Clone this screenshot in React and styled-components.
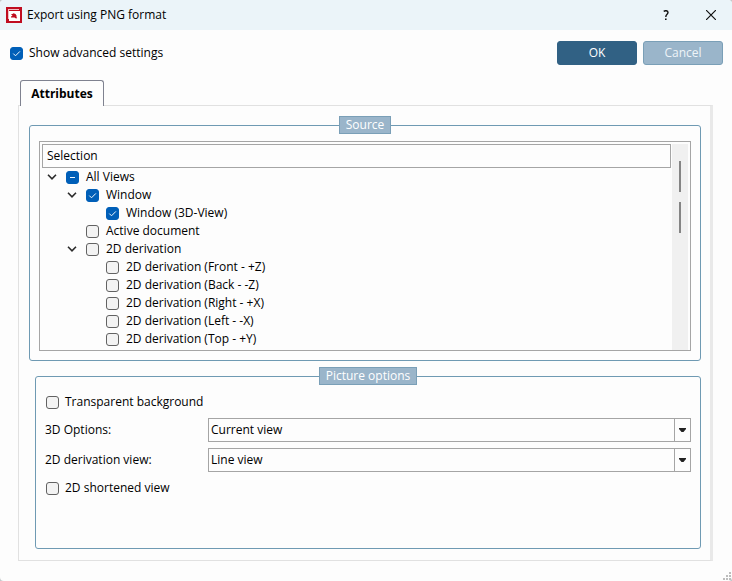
import React, { useEffect, useRef, useState } from 'react';
import styled, { createGlobalStyle } from 'styled-components';

const GlobalStyle = createGlobalStyle`
  * {
    box-sizing: border-box;
  }

  body {
    margin: 0;
    background: #c4c8ca;
  }

  body, button, select, input {
    font-family: 'Open Sans', 'Noto Sans', sans-serif;
    font-size: 12px;
    line-height: 18px;
    color: #000;
  }
`;

const Shell = styled.div`
  position: relative;
`;

const Dialog = styled.div`
  display: flex;
  flex-direction: column;
  min-height: 100vh;
  background: #fdfdfd;
  border-radius: 4px;
  overflow: hidden;
`;

const TitleBar = styled.header`
  display: flex;
  align-items: center;
  height: 30px;
  padding: 0 6px;
  background: #ebf4f9;
`;

const Title = styled.h1`
  flex: 1;
  margin: 0 0 0 5px;
  font-size: 12px;
  font-weight: 400;
`;

const TitleButton = styled.button`
  display: flex;
  align-items: center;
  justify-content: center;
  width: 30px;
  height: 28px;
  margin-left: ${({ $gap }) => $gap || 0}px;
  padding: 0;
  border: 0;
  background: transparent;
`;

const Toolbar = styled.div`
  display: flex;
  align-items: center;
  gap: 6px;
  padding: 11px 9px 15px 10px;
`;

const Spacer = styled.div`
  flex: 1;
`;

const ActionButton = styled.button`
  width: 80px;
  height: 24px;
  padding: 0;
  border: 1px solid ${({ $primary }) => ($primary ? '#316184' : '#7a9fb7')};
  border-radius: 3px;
  background: ${({ $primary }) => ($primary ? '#316184' : '#9ab5ca')};
  color: ${({ $primary }) => ($primary ? '#fff' : '#eef4f8')};
`;

const CheckLabel = styled.label`
  display: inline-flex;
  align-items: center;
  gap: ${({ $gap }) => $gap || 6}px;
  height: 18px;
  white-space: nowrap;
`;

const CheckBox = styled.span`
  display: grid;
  width: 13px;
  height: 13px;

  > * {
    grid-area: 1 / 1;
  }

  svg {
    pointer-events: none;
  }
`;

const CheckInput = styled.input`
  appearance: none;
  width: 13px;
  height: 13px;
  margin: 0;
  border: 1px solid #626262;
  border-radius: 3px;
  background: #f3f3f3;

  &:checked,
  &:indeterminate {
    border-color: #005fb8;
    background: #005fb8;
  }
`;

const TabList = styled.div`
  display: flex;
  padding: 0 20px;
`;

const Tab = styled.button`
  position: relative;
  height: 26px;
  min-width: 84px;
  margin-bottom: -1px;
  padding: 0 10px;
  border: 1px solid #7f8290;
  border-bottom: 0;
  border-radius: 3px 3px 0 0;
  background: #fdfdfd;
  font-weight: 700;
`;

const TabPanel = styled.div`
  display: flex;
  flex: 1;
  flex-direction: column;
  gap: 6px;
  margin: 0 19px 20px 18px;
  padding: 10px 9px 11px 10px;
  border: 1px solid #e1e1e1;
  border-right: 3px solid #e9e9e9;
`;

const Group = styled.fieldset`
  flex: ${({ $grow }) => ($grow ? '1' : 'none')};
  min-width: 0;
  margin: 0 0 0 ${({ $indent }) => $indent || 0}px;
  padding: ${({ $padding }) => $padding};
  border: 1px solid #6f9ab3;
  border-radius: 3px;
`;

const Legend = styled.legend`
  height: 18px;
  margin: 0 auto;
  padding: 0 6px;
  border: 1px solid #7a9fb7;
  background: #9ab5ca;
  color: #fff;
  line-height: 16px;
`;

const TreeFrame = styled.div`
  display: flex;
  gap: 1px;
  height: 210px;
  padding: 2px 2px 0;
  border: 1px solid #a5a5a5;
`;

const TreeMain = styled.div`
  flex: 1;
  overflow: hidden;
`;

const TreeHeader = styled.div`
  height: 24px;
  padding: 2px 4px;
  border: 1px solid #a5a5a5;
`;

const TreeList = styled.ul`
  margin: 0;
  padding: 0;
  list-style: none;
`;

const TreeRow = styled.li`
  display: flex;
  align-items: center;
  height: 18px;
  padding-left: ${({ $level }) => $level * 20 + 5}px;
`;

const Expander = styled.button`
  display: flex;
  align-items: center;
  width: 19px;
  height: 18px;
  padding: 0;
  border: 0;
  background: transparent;
`;

const ExpanderGap = styled.span`
  width: 19px;
`;

const ScrollTrack = styled.div`
  display: flex;
  flex-direction: column;
  align-items: center;
  gap: 10px;
  width: 16px;
  padding-top: 17px;
  background: #f0f0f0;
`;

const ScrollMark = styled.div`
  width: 2px;
  height: 31px;
  background: #858585;
`;

const OptionRow = styled.div`
  display: grid;
  grid-template-columns: 162px 1fr;
  align-items: center;
  height: 24px;
  margin-bottom: 6px;
`;

const SelectWrap = styled.div`
  position: relative;
  height: 24px;
  margin-left: 1px;
`;

const Select = styled.select`
  appearance: none;
  width: 100%;
  height: 24px;
  padding: 0 20px 0 2px;
  border: 1px solid #a5a5a5;
  border-radius: 0;
  background: #fdfdfd;
`;

const SelectArrow = styled.span`
  position: absolute;
  top: 0;
  right: 0;
  display: flex;
  align-items: center;
  justify-content: center;
  width: 17px;
  height: 24px;
  border: 1px solid #a5a5a5;
  pointer-events: none;
`;

const CheckRow = styled.div`
  display: flex;
  margin: 7px 0;
  padding-left: 1px;
`;

const SizeGrip = styled.svg`
  position: absolute;
  right: 0;
  bottom: 0;
`;

const TREE = [
  { id: 'all', label: 'All Views', level: 0, parent: true, state: 'mixed' },
  { id: 'window', label: 'Window', level: 1, parent: true, state: 'on' },
  { id: 'window3d', label: 'Window (3D-View)', level: 2, state: 'on' },
  { id: 'active', label: 'Active document', level: 1 },
  { id: '2d', label: '2D derivation', level: 1, parent: true },
  { id: 'front', label: '2D derivation (Front - +Z)', level: 2 },
  { id: 'back', label: '2D derivation (Back - -Z)', level: 2 },
  { id: 'right', label: '2D derivation (Right - +X)', level: 2 },
  { id: 'left', label: '2D derivation (Left - -X)', level: 2 },
  { id: 'top', label: '2D derivation (Top - +Y)', level: 2 },
];

const AppIcon = () => (
  <svg width="16" height="16" viewBox="0 0 16 16" aria-hidden="true">
    <rect width="16" height="16" fill="#c00d20" />
    <path d="M2 2h11v1H3v9H2z" fill="#f0bfc4" />
    <rect x="3" y="4" width="11" height="10" fill="#fff" />
    <path d="M5 7h1.5l1-.8 2 .8 1 1.6v1.6l.8.8-1.3.6-1.5-1H5V9.400l1.500-.6z" fill="#c00d20" />
  </svg>
);

const Check = ({ label, state, gap }) => {
  const [checked, setChecked] = useState(state === 'on');
  const [mixed, setMixed] = useState(state === 'mixed');
  const ref = useRef(null);

  useEffect(() => {
    ref.current.indeterminate = mixed;
  }, [mixed]);

  const onChange = e => {
    setMixed(false);
    setChecked(e.target.checked);
  };

  return (
    <CheckLabel $gap={gap}>
      <CheckBox>
        <CheckInput ref={ref} type="checkbox" checked={checked} onChange={onChange} />
        {(checked || mixed) && (
          <svg width="13" height="13" viewBox="0 0 13 13" fill="none" stroke="#f0f7fc">
            {mixed ? <path d="M4 6.5h5" /> : <path d="M3.3 6.6l2.2 2.2 4.4-4.4" />}
          </svg>
        )}
      </CheckBox>
      {label}
    </CheckLabel>
  );
};

const Combo = ({ id, label, options }) => (
  <OptionRow>
    <label htmlFor={id}>{label}</label>
    <SelectWrap>
      <Select id={id} defaultValue={options[0]}>
        {options.map(option => (
          <option key={option}>{option}</option>
        ))}
      </Select>
      <SelectArrow>
        <svg width="7" height="4" viewBox="0 0 7 4">
          <path d="M0 0h7v1L4.5 4h-2L0 1z" fill="#222" />
        </svg>
      </SelectArrow>
    </SelectWrap>
  </OptionRow>
);

const App = () => (
  <Shell>
    <GlobalStyle />
    <Dialog role="dialog" aria-labelledby="dialog-title">
      <TitleBar>
        <AppIcon />
        <Title id="dialog-title">Export using PNG format</Title>
        <TitleButton type="button" aria-label="Help">
          <svg width="8" height="10" viewBox="0 0 8 10" fill="none" stroke="#111" strokeWidth="1.4">
            <path d="M1.7 1.3C3 .4 6 .4 6 2.6 6 4.4 3.8 4.3 3.8 7" />
            <path d="M3 9.2h1.6" />
          </svg>
        </TitleButton>
        <TitleButton type="button" aria-label="Close" $gap={15}>
          <svg width="10" height="10" viewBox="0 0 10 10" stroke="#111" strokeWidth="1.2">
            <path d="M0 0l10 10M10 0L0 10" />
          </svg>
        </TitleButton>
      </TitleBar>
      <Toolbar>
        <Check label="Show advanced settings" state="on" />
        <Spacer />
        <ActionButton type="button" $primary>
          OK
        </ActionButton>
        <ActionButton type="button">Cancel</ActionButton>
      </Toolbar>
      <TabList role="tablist">
        <Tab type="button" role="tab" id="tab-attributes" aria-selected="true" aria-controls="panel-attributes">
          Attributes
        </Tab>
      </TabList>
      <TabPanel role="tabpanel" id="panel-attributes" aria-labelledby="tab-attributes">
        <Group $padding="7px 9px 9px">
          <Legend>Source</Legend>
          <TreeFrame>
            <TreeMain>
              <TreeHeader>Selection</TreeHeader>
              <TreeList>
                {TREE.map(node => (
                  <TreeRow key={node.id} $level={node.level}>
                    {node.parent ? (
                      <Expander type="button" aria-label={`Collapse ${node.label}`}>
                        <svg width="10" height="6" viewBox="0 0 10 6" fill="none" stroke="#2b2b2b" strokeWidth="1.6">
                          <path d="M1 .8l4 4 4-4" />
                        </svg>
                      </Expander>
                    ) : (
                      <ExpanderGap />
                    )}
                    <Check label={node.label} state={node.state} gap={7} />
                  </TreeRow>
                ))}
              </TreeList>
            </TreeMain>
            <ScrollTrack>
              <ScrollMark />
              <ScrollMark />
            </ScrollTrack>
          </TreeFrame>
        </Group>
        <Group $grow $indent={6} $padding="1px 9px">
          <Legend>Picture options</Legend>
          <CheckRow>
            <Check label="Transparent background" />
          </CheckRow>
          <Combo id="options-3d" label="3D Options:" options={['Current view']} />
          <Combo id="view-2d" label="2D derivation view:" options={['Line view']} />
          <CheckRow>
            <Check label="2D shortened view" />
          </CheckRow>
        </Group>
      </TabPanel>
    </Dialog>
    <SizeGrip width="9" height="9" viewBox="0 0 9 9" fill="#bdbdbd" aria-hidden="true">
      <path d="M6 0h2v2H6zM3 3h2v2H3zM6 3h2v2H6zM0 6h2v2H0zM3 6h2v2H3zM6 6h2v2H6z" />
    </SizeGrip>
  </Shell>
);

export default App;
